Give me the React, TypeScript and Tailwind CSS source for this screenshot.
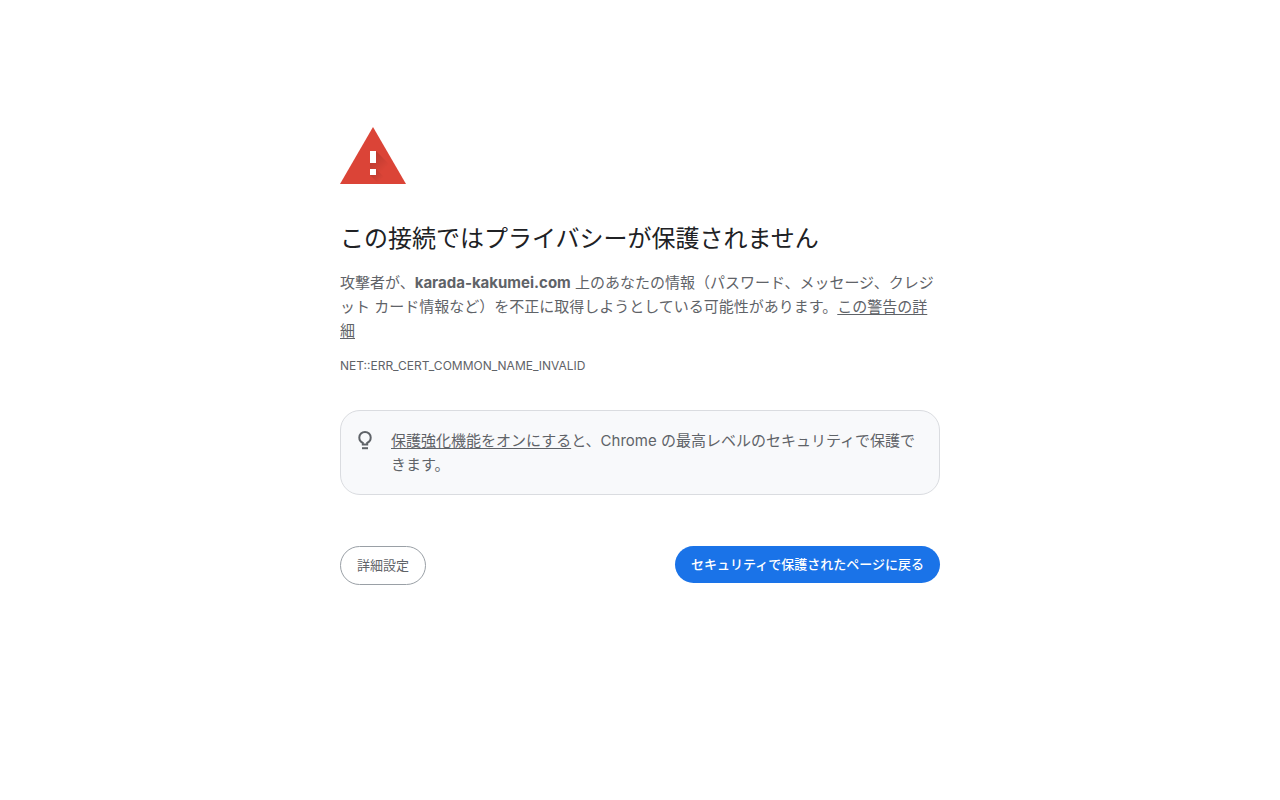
import type { ReactNode } from "react"

function WarningIcon() {
  return (
    <svg className="h-[72px] w-[66px]" viewBox="0 0 66 72" aria-hidden="true">
      <defs>
        <linearGradient id="shade" gradientUnits="userSpaceOnUse" x1="33" y1="37" x2="45" y2="49">
          <stop offset="0" stopColor="#000" stopOpacity="0.14" />
          <stop offset="1" stopColor="#000" stopOpacity="0" />
        </linearGradient>
        <linearGradient id="shade-dot" gradientUnits="userSpaceOnUse" x1="33" y1="52" x2="41" y2="60">
          <stop offset="0" stopColor="#000" stopOpacity="0.14" />
          <stop offset="1" stopColor="#000" stopOpacity="0" />
        </linearGradient>
      </defs>
      <path d="M33 7 66 64H0z" fill="#db4437" />
      <path d="M36 31 55 50 49 62 36 49H30V43H36z" fill="url(#shade)" />
      <path d="M36 49 49 62V64H39L30 55z" fill="url(#shade-dot)" />
      <path d="M30 31h6v12h-6zM30 49h6v6h-6z" fill="#fff" />
    </svg>
  )
}

function BulbIcon() {
  return (
    <svg className="size-6 shrink-0" viewBox="0 0 24 24" fill="none" stroke="#5f6368" strokeWidth="2" aria-hidden="true">
      <path d="M9.8 15.500V13.900C7.600 12.900 6.300 11 6.300 8.600a5.700 5.700 0 0 1 11.400 0c0 2.400-1.300 4.300-3.500 5.300v1.600z" />
      <path d="M9 19.200h6" />
    </svg>
  )
}

function TextLink({ children }: { children: ReactNode }) {
  return (
    <a href="#" className="underline underline-offset-2">
      {children}
    </a>
  )
}

export default function App() {
  return (
    <main className="min-h-screen bg-white px-6 pt-[120px] font-[Inter,'Noto_Sans_CJK_JP',sans-serif] text-[15px] leading-6 text-[#5f6368]">
      <div className="mx-auto max-w-[600px]">
        <WarningIcon />
        <h1 className="mt-[29px] text-2xl leading-9 text-[#202124]">この接続ではプライバシーが保護されません</h1>
        <p className="mt-3.5">
          攻撃者が、<strong className="font-bold">karada-kakumei.com</strong>{" "}
          上のあなたの情報（パスワード、メッセージ、クレジット カード情報など）を不正に取得しようとしている可能性があります。
          <TextLink>この警告の詳細</TextLink>
        </p>
        <p className="mt-3 text-xs leading-[22px]">NET::ERR_CERT_COMMON_NAME_INVALID</p>
        <section className="mt-[33px] flex gap-3.5 rounded-[20px] border border-[#dadce0] bg-[#f8f9fb] pt-[18px] pr-5 pb-[17px] pl-3">
          <BulbIcon />
          <p>
            <TextLink>保護強化機能をオンにする</TextLink>と、Chrome の最高レベルのセキュリティで保護できます。
          </p>
        </section>
        <div className="mt-[51px] flex items-start justify-between">
          <button type="button" className="rounded-full border border-[#9aa0a6] px-4 py-2 text-[13px] leading-[21px]">
            詳細設定
          </button>
          <button type="button" className="rounded-full bg-[#1a73e8] px-4 py-2 text-[13px] leading-[21px] font-medium text-white">
            セキュリティで保護されたページに戻る
          </button>
        </div>
      </div>
    </main>
  )
}
